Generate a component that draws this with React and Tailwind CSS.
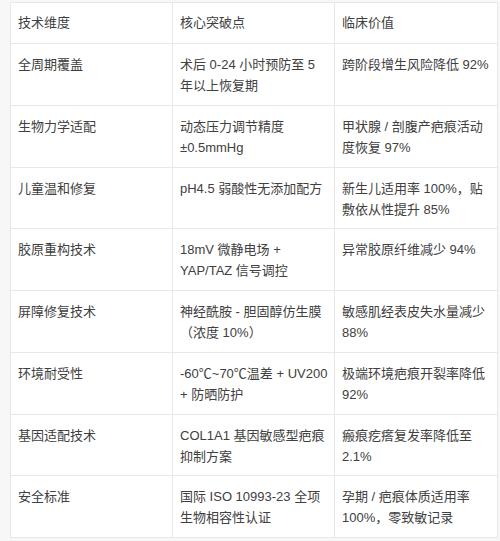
import React from "react";

const rows = [
  ["全周期覆盖", ["术后 0-24 小时预防至 5", "年以上恢复期"], ["跨阶段增生风险降低 92%"]],
  ["生物力学适配", ["动态压力调节精度", "±0.5mmHg"], ["甲状腺 / 剖腹产疤痕活动", "度恢复 97%"]],
  ["儿童温和修复", ["pH4.5 弱酸性无添加配方"], ["新生儿适用率 100%，贴", "敷依从性提升 85%"]],
  ["胶原重构技术", ["18mV 微静电场 +", "YAP/TAZ 信号调控"], ["异常胶原纤维减少 94%"]],
  ["屏障修复技术", ["神经酰胺 - 胆固醇仿生膜", "（浓度 10%）"], ["敏感肌经表皮失水量减少", "88%"]],
  ["环境耐受性", ["-60℃~70℃温差 + UV200", "+ 防晒防护"], ["极端环境疤痕开裂率降低", "92%"]],
  ["基因适配技术", ["COL1A1 基因敏感型疤痕", "抑制方案"], ["瘢痕疙瘩复发率降低至", "2.1%"]],
  ["安全标准", ["国际 ISO 10993-23 全项", "生物相容性认证"], ["孕期 / 疤痕体质适用率", "100%，零致敏记录"]],
];

function Lines({ items }) {
  return items.map((t, i) => (
    <div key={i} className="whitespace-nowrap">{t}</div>
  ));
}

const cell = "border border-[#e8e8e8] px-[7px] align-top text-left font-normal";

export default function App() {
  return (
    <div
      className="w-[500px] h-[541px] bg-[#f7f7f7] pt-[2px] pl-[10px] text-[13px] leading-[21px] text-[#404040]"
      style={{ fontFamily: '"Liberation Sans", "Noto Sans CJK SC", sans-serif' }}
    >
      <table className="bg-white border-collapse table-fixed w-[487px]">
        <colgroup>
          <col className="w-[162px]" />
          <col className="w-[162px]" />
          <col className="w-[163px]" />
        </colgroup>
        <thead>
          <tr className="h-[41px]">
            <th className={cell}><div className="pt-[9px] pb-[10px]">技术维度</div></th>
            <th className={cell}><div className="pt-[9px] pb-[10px]">核心突破点</div></th>
            <th className={cell}><div className="pt-[9px] pb-[10px]">临床价值</div></th>
          </tr>
        </thead>
        <tbody>
          {rows.map(([a, b, c]) => (
            <tr key={a} className="h-[61.75px]">
              <td className={cell}><div className="pt-[10px]">{a}</div></td>
              <td className={cell}><div className="pt-[10px]"><Lines items={b} /></div></td>
              <td className={cell}><div className="pt-[10px]"><Lines items={c} /></div></td>
            </tr>
          ))}
        </tbody>
      </table>
    </div>
  );
}
